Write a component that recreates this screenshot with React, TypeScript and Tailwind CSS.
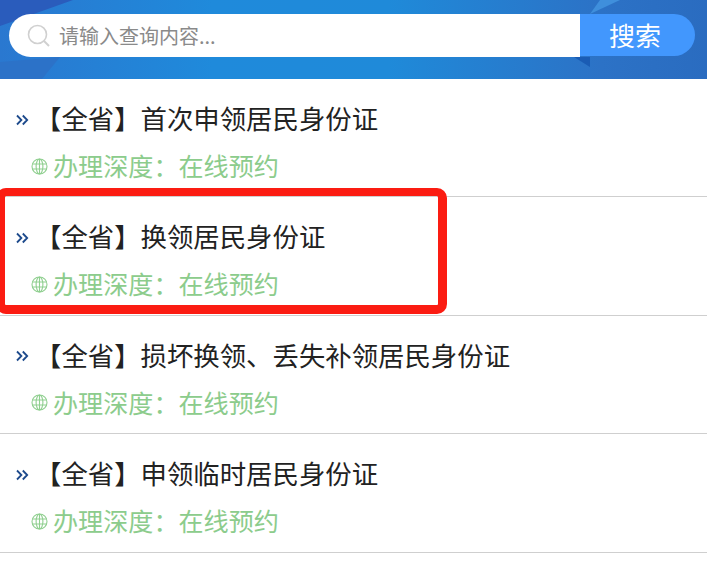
import React from "react";

const rows = ["首次申领居民身份证", "换领居民身份证", "损坏换领、丢失补领居民身份证", "申领临时居民身份证"];

function Chevrons() {
  return (
    <svg width="13" height="12" viewBox="0 0 13 12" fill="none" stroke="#1d4a8c" strokeWidth="1.8" className="mt-[3px] shrink-0">
      <path d="M1 1.5 5.4 6 1 10.5" />
      <path d="M6.8 1.5 11.2 6 6.8 10.5" />
    </svg>
  );
}

function Globe() {
  return (
    <svg width="17" height="17" viewBox="0 0 17 17" fill="none" stroke="#8fcf8f" strokeWidth="1.1" className="mt-[2px] shrink-0">
      <circle cx="8.5" cy="8.5" r="7.5" />
      <ellipse cx="8.5" cy="8.5" rx="3.4" ry="7.5" />
      <path d="M8.5 1v15M1.3 6h14.4M1.3 11h14.4" />
    </svg>
  );
}

export default function App() {
  return (
    <div className="relative min-h-[562px] bg-white font-['Microsoft_YaHei','Noto_Sans_CJK_SC',sans-serif]">
      <header className="relative h-[79px] overflow-hidden bg-[linear-gradient(90deg,#2a78d0_0%,#1f8adb_30%,#1f8ad9_55%,#2c72c6_85%,#2a6cc0_100%)] pl-[9px] pr-3 pt-[14px]">
        <svg className="absolute inset-0" width="707" height="79" viewBox="0 0 707 79">
          <polygon points="0,0 73,0 0,26" fill="#2a5cbc" />
          <polygon points="0,79 0,62 60,57 42,79" fill="#2c72c8" />
          <polygon points="590,14 620,0 600,0" fill="#3f8fdc" />
          <polygon points="574,57 590,57 590,67" fill="#1a5cb4" />
        </svg>
        <div className="relative flex items-start">
          <div className="flex h-[43px] w-[571px] items-center rounded-l-[22px] bg-white pl-[18px]">
            <svg width="24" height="24" viewBox="0 0 24 24" fill="none" stroke="#d0d0d0" strokeWidth="1.6" className="shrink-0">
              <circle cx="10.5" cy="10.5" r="9" />
              <path d="M17 17l5 5" strokeWidth="2" />
            </svg>
            <span className="ml-[8px] text-[20px] text-[#8a8a8a]">请输入查询内容...</span>
          </div>
          <button className="h-[42px] w-[115px] rounded-r-[22px] bg-[#4297fd] pr-[5px] text-[26px] leading-[40px] text-white">搜索</button>
        </div>
      </header>
      <ul>
        {rows.map((t) => (
          <li key={t} className="h-[118.4px] border-b border-[#cfcfcf] pl-[16px] pt-[20px]">
            <div className="flex h-[38px] items-center">
              <Chevrons />
              <span className="ml-[6px] whitespace-nowrap text-[26.4px] leading-[38px] text-[#222]">【全省】{t}</span>
            </div>
            <div className="mt-[9px] flex h-[38px] items-center pl-[15px]">
              <Globe />
              <span className="ml-[5px] whitespace-nowrap text-[25.1px] leading-[38px] text-[#8ccc8c]">办理深度：在线预约</span>
            </div>
          </li>
        ))}
      </ul>
      <div className="pointer-events-none absolute left-[-4px] top-[188px] h-[126px] w-[451px] rounded-[10px] border-[9px] border-t-[8px] border-[#fb1c12]" />
    </div>
  );
}
